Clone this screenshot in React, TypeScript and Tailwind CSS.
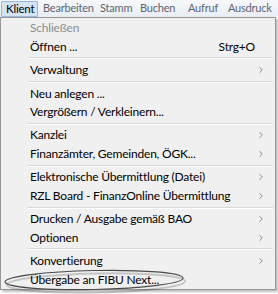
import { ChevronRight } from "lucide-react";

type Item =
  | { sep: true }
  | { label: string; disabled?: boolean; shortcut?: string; sub?: boolean };

const items: Item[] = [
  { label: "Schließen", disabled: true },
  { label: "Öffnen ...", shortcut: "Strg+O" },
  { sep: true },
  { label: "Verwaltung", sub: true },
  { sep: true },
  { label: "Neu anlegen ..." },
  { label: "Vergrößern / Verkleinern..." },
  { sep: true },
  { label: "Kanzlei", sub: true },
  { label: "Finanzämter, Gemeinden, ÖGK...", sub: true },
  { sep: true },
  { label: "Elektronische Übermittlung (Datei)", sub: true },
  { label: "RZL Board - FinanzOnline Übermittlung", sub: true },
  { sep: true },
  { label: "Drucken / Ausgabe gemäß BAO", sub: true },
  { label: "Optionen", sub: true },
  { sep: true },
  { label: "Konvertierung", sub: true },
  { label: "Übergabe an FIBU Next..." },
];

export default function App() {
  return (
    <div
      className="relative w-[278px] h-[294px] bg-white overflow-hidden text-[12px] tracking-[-0.2px] text-black"
      style={{ fontFamily: 'Lato, "Noto Sans", sans-serif' }}
    >
      {/* menu bar */}
      <div className="flex items-center h-[17px] bg-gradient-to-b from-[#f6f8fb] to-[#e9eef5] pl-[1px] text-[11px] tracking-[-0.2px] text-[#5c6670]">
        <div className="w-[37px] h-[16px] pl-[4px] flex items-center bg-[#d5e4f5] border border-[#99b7d9] rounded-[1px] text-[11.5px] text-black">
          Klient
        </div>
        <div className="w-[57px] pl-[5px]">Bearbeiten</div>
        <div className="w-[40px] pl-[5px]">Stamm</div>
        <div className="w-[48px] pl-[5px]">Buchen</div>
        <div className="w-[40px] pl-[5px]">Aufruf</div>
        <div className="pl-[5px]">Ausdruck</div>
      </div>

      {/* dropdown */}
      <div className="w-[276px] h-[273px] bg-[#f0f0f0] border border-[#979797] shadow-[2px_2px_2px_rgba(0,0,0,0.25)] pt-[1px] flex flex-col">
        {items.map((it, i) =>
          "sep" in it ? (
            <div key={i} className="h-[5px] flex items-center pl-[27px] pr-[2px]">
              <div className="h-[1px] w-full bg-[#d7d7d7] border-b border-white box-content" />
            </div>
          ) : (
            <div key={i} className="h-[18.6px] flex items-center pl-[29px] pr-[9px]">
              <span className={it.disabled ? "text-[#8d8d8d]" : ""}>{it.label}</span>
              <span className="ml-auto flex items-center">
                {it.shortcut && <span className="mr-[11px]">{it.shortcut}</span>}
                {it.sub && <ChevronRight size={10} strokeWidth={1.75} className="text-[#666]" />}
              </span>
            </div>
          )
        )}
      </div>

      {/* annotation ellipse */}
      <svg className="absolute left-0 top-0 pointer-events-none" width="278" height="294">
        <ellipse cx="95" cy="281" rx="89" ry="9.5" fill="none" stroke="rgba(0,0,0,0.18)" strokeWidth="2" transform="translate(1 2) rotate(-1.2 95 281)" />
        <ellipse cx="94" cy="280" rx="89" ry="9.5" fill="none" stroke="#4a4a4a" strokeWidth="1.2" transform="rotate(-1.2 94 280)" />
      </svg>
    </div>
  );
}
